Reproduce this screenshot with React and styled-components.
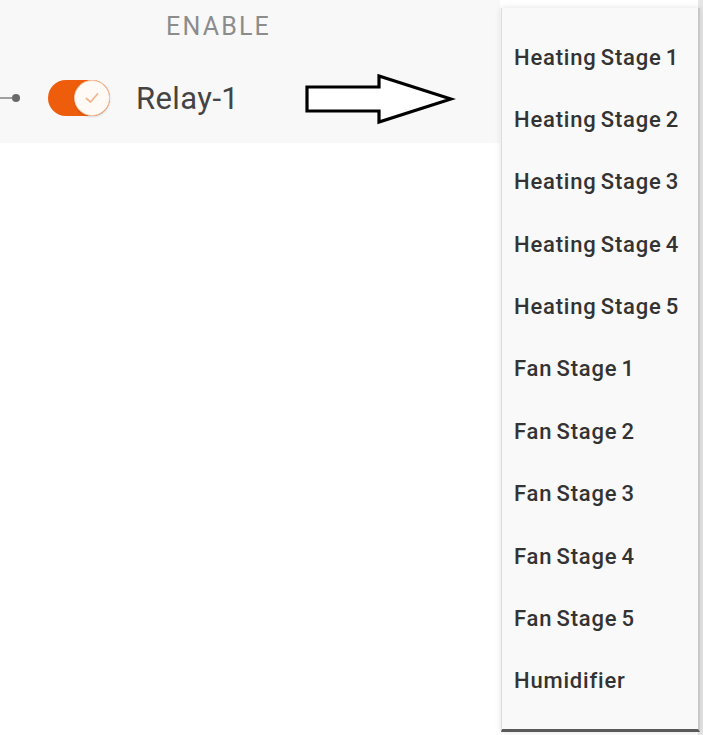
import React from "react";
import styled, { createGlobalStyle } from "styled-components";

const GlobalStyle = createGlobalStyle`
  html, body {
    margin: 0;
    padding: 0;
    background: #ffffff;
    font-family: Roboto, "Liberation Sans", sans-serif;
  }
`;

const items = [
  "Heating Stage 1",
  "Heating Stage 2",
  "Heating Stage 3",
  "Heating Stage 4",
  "Heating Stage 5",
  "Fan Stage 1",
  "Fan Stage 2",
  "Fan Stage 3",
  "Fan Stage 4",
  "Fan Stage 5",
  "Humidifier",
];

const App = () => {
  return (
    <>
      <GlobalStyle />
      <Page>
        <Band>
          <Header>ENABLE</Header>
          <RelayRow>
            <Connector>
              <Wire />
              <Dot />
            </Connector>
            <Toggle>
              <Knob>
                <svg width="18" height="18" viewBox="0 0 18 18">
                  <path d="M3.5 9.5 L7.5 13 L14.5 5" fill="none" stroke="#f3b48c" strokeWidth="1.8" strokeLinecap="round" strokeLinejoin="round" />
                </svg>
              </Knob>
            </Toggle>
            <RelayLabel>Relay-1</RelayLabel>
            <ArrowIcon width="152" height="52" viewBox="0 0 152 52">
              <path
                d="M3 13 L75 13 L75 2 L147 25 L75 48 L75 37 L3 37 Z"
                fill="#ffffff"
                stroke="#000000"
                strokeWidth="3.2"
                strokeLinejoin="miter"
              />
            </ArrowIcon>
          </RelayRow>
        </Band>
        <EdgeStrip />
        <Menu>
          {items.map((label) => (
            <MenuItem key={label}>{label}</MenuItem>
          ))}
        </Menu>
      </Page>
    </>
  );
};

export default App;

const Page = styled.div`
  position: relative;
  width: 703px;
  height: 735px;
  overflow: hidden;
  background: #ffffff;
`;

const Band = styled.div`
  width: 500px;
  height: 143px;
  background: #f8f8f8;
  display: flex;
  flex-direction: column;
`;

const Header = styled.div`
  padding: 12px 0 0 166px;
  height: 32px;
  font-size: 25px;
  color: #8c8c8c;
  letter-spacing: 2.2px;
`;

const RelayRow = styled.div`
  display: flex;
  align-items: center;
  margin-top: 34px;
  height: 40px;
`;

const Connector = styled.div`
  display: flex;
  align-items: center;
  width: 48px;
`;

const Wire = styled.div`
  width: 12px;
  height: 2px;
  background: #a0a0a0;
`;

const Dot = styled.div`
  width: 8px;
  height: 8px;
  border-radius: 50%;
  background: #6a6a6a;
`;

const Toggle = styled.div`
  position: relative;
  width: 62px;
  height: 36px;
  border-radius: 18px;
  background: #ee5d0c;
  display: flex;
  align-items: center;
  justify-content: flex-end;
`;

const Knob = styled.div`
  width: 34px;
  height: 34px;
  border-radius: 50%;
  background: #fffaf5;
  border: 1px solid #f6c9aa;
  display: flex;
  align-items: center;
  justify-content: center;
  box-shadow: 0 1px 2px rgba(0, 0, 0, 0.15);
`;

const RelayLabel = styled.div`
  margin-left: 26px;
  font-size: 31px;
  letter-spacing: 0.4px;
  color: #444444;
  width: 166px;
`;

const ArrowIcon = styled.svg`
  margin-left: 2px;
  margin-top: 4px;
  display: block;
`;

const EdgeStrip = styled.div`
  position: absolute;
  top: 0;
  right: 0;
  width: 5px;
  height: 735px;
  background: #e6e6e6;
`;

const Menu = styled.div`
  position: absolute;
  top: 8px;
  left: 501px;
  width: 199px;
  height: 724px;
  box-sizing: border-box;
  padding: 18px 0 17px;
  background: #f9f9f9;
  border-left: 1px solid #dcdcdc;
  border-right: 2px solid #c8c8c8;
  border-bottom: 3px solid #5a5a5a;
  box-shadow: 0 0 6px rgba(0, 0, 0, 0.12);
  display: flex;
  flex-direction: column;
`;

const MenuItem = styled.div`
  height: 62.7px;
  display: flex;
  align-items: center;
  padding-left: 12px;
  font-size: 22px;
  letter-spacing: 0.8px;
  word-spacing: -2px;
  font-weight: 500;
  color: #333333;
  white-space: nowrap;
`;
